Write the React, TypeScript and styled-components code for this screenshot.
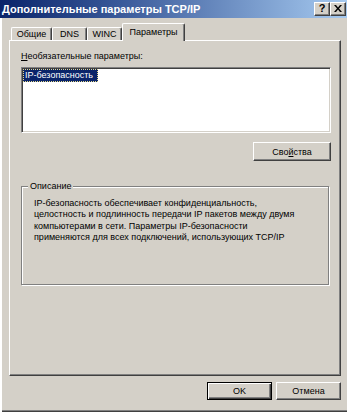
import styled, { createGlobalStyle } from 'styled-components';

const GlobalStyle = createGlobalStyle`
  html, body {
    margin: 0;
    padding: 0;
    background: #d4d0c8;
  }
  body {
    font-family: 'Liberation Sans', Arial, sans-serif;
    font-size: 9px;
    color: #000;
  }
`;

const Window = styled.div`
  width: 347px;
  height: 412px;
  box-sizing: border-box;
  display: flex;
  flex-direction: column;
  background: #d4d0c8;
  box-shadow: inset 2px 0 0 #fff, inset 1px 0 0 #d4d0c8, inset 0 -1px 0 #404040, inset 0 -2px 0 #808080;
`;

const TitleBar = styled.div`
  height: 18px;
  display: flex;
  align-items: center;
  padding: 0 1px 0 2px;
  background: linear-gradient(to right, #0a246a 0%, #3a5a9a 35%, #a6caf0 100%);
`;

const TitleText = styled.div`
  flex: 1;
  color: #fff;
  font-weight: bold;
  font-size: 11px;
  white-space: nowrap;
`;

const CaptionButton = styled.div`
  width: 16px;
  height: 14px;
  box-sizing: border-box;
  display: flex;
  align-items: center;
  justify-content: center;
  background: #d4d0c8;
  border: 1px solid;
  border-color: #fff #404040 #404040 #fff;
  box-shadow: inset -1px -1px 0 #808080;
  font-weight: bold;
  font-size: 11px;
  line-height: 1;
  padding-bottom: 1px;
`;

const Body = styled.div`
  flex: 1;
  display: flex;
  flex-direction: column;
  padding: 5px 0 0 9px;
`;

const TabRow = styled.div`
  height: 17px;
  display: flex;
  align-items: flex-end;
  padding-left: 2px;
  position: relative;
  z-index: 1;
`;

const Tab = styled.div<{ $active?: boolean; $w: number }>`
  width: ${p => p.$w}px;
  height: ${p => (p.$active ? 18 : 13)}px;
  margin-bottom: ${p => (p.$active ? -1 : 0)}px;
  box-sizing: border-box;
  background: #d4d0c8;
  border-top: 1px solid #fff;
  border-left: 1px solid #fff;
  border-right: 1px solid #404040;
  border-radius: 2px 2px 0 0;
  box-shadow: inset -1px 0 0 #808080;
  display: flex;
  align-items: ${p => (p.$active ? 'flex-start' : 'center')};
  padding-top: ${p => (p.$active ? 3 : 0)}px;
  justify-content: center;
  white-space: nowrap;
`;

const Panel = styled.div`
  width: 332px;
  height: 336px;
  box-sizing: border-box;
  border-top: 1px solid #fff;
  border-left: 1px solid #fff;
  border-right: 1px solid #404040;
  border-bottom: 1px solid #404040;
  box-shadow: inset -1px -1px 0 #808080;
  padding: 9px 9px 0 11px;
  display: flex;
  flex-direction: column;
`;

const FieldLabel = styled.div`
  line-height: 13px;
  white-space: nowrap;
`;

const ListBox = styled.div`
  margin-top: 4px;
  height: 66px;
  box-sizing: border-box;
  background: #fff;
  border: 1px solid;
  border-color: #808080 #fff #fff #808080;
  box-shadow: inset 1px 1px 0 #404040, inset -1px -1px 0 #d4d0c8;
  padding: 1px 0 0 1px;
`;

const ListItem = styled.div`
  display: inline-block;
  background: #0a246a;
  color: #fff;
  line-height: 11px;
  padding: 0 4px 0 1px;
  border: 1px dotted #e8dc8c;
`;

const ButtonRow = styled.div<{ $top?: number }>`
  display: flex;
  justify-content: flex-end;
  gap: 4px;
  margin-top: ${p => p.$top ?? 0}px;
`;

const Button = styled.div<{ $w: number; $h: number; $default?: boolean }>`
  width: ${p => p.$w}px;
  height: ${p => p.$h}px;
  box-sizing: border-box;
  display: flex;
  align-items: center;
  justify-content: center;
  background: #d4d0c8;
  border: 1px solid;
  border-color: ${p => (p.$default ? '#000' : '#fff #404040 #404040 #fff')};
  box-shadow: ${p =>
    p.$default
      ? 'inset 1px 1px 0 #fff, inset -1px -1px 0 #404040, inset -2px -2px 0 #808080'
      : 'inset -1px -1px 0 #808080'};
  white-space: nowrap;
`;

const GroupBox = styled.div`
  position: relative;
  margin-top: 25px;
  height: 99px;
  width: 308px;
  box-sizing: border-box;
  border: 1px solid #808080;
  box-shadow: 1px 1px 0 #fff, inset 1px 1px 0 #fff;
  padding: 11px 0 0 12px;
`;

const Legend = styled.div`
  position: absolute;
  top: -7px;
  left: 6px;
  padding: 0 2px;
  background: #d4d0c8;
  line-height: 13px;
`;

const Description = styled.div`
  line-height: 11.4px;
  white-space: nowrap;
`;

const Footer = styled.div`
  width: 332px;
  margin-top: 6px;
`;

export default function App() {
  return (
    <>
      <GlobalStyle />
      <Window>
        <TitleBar>
          <TitleText>Дополнительные параметры TCP/IP</TitleText>
          <CaptionButton>?</CaptionButton>
          <CaptionButton>
            <svg width="8" height="7" viewBox="0 0 8 7">
              <path d="M0 0h2l2 2.5L6 0h2L5 3.5 8 7H6L4 4.5 2 7H0l3-3.5z" fill="#000" />
            </svg>
          </CaptionButton>
        </TitleBar>
        <Body>
          <TabRow>
            <Tab $w={41}>Общие</Tab>
            <Tab $w={35}>DNS</Tab>
            <Tab $w={35}>WINC</Tab>
            <Tab $w={63} $active>Параметры</Tab>
          </TabRow>
          <Panel>
            <FieldLabel>
              <u>Н</u>еобязательные параметры:
            </FieldLabel>
            <ListBox>
              <ListItem>IP-безопасность</ListItem>
            </ListBox>
            <ButtonRow $top={9}>
              <Button $w={78} $h={19}>
                Сво<u>й</u>ства
              </Button>
            </ButtonRow>
            <GroupBox>
              <Legend>Описание</Legend>
              <Description>
                IP-безопасность обеспечивает конфиденциальность,
                <br />
                целостность и подлинность передачи IP пакетов между двумя
                <br />
                компьютерами в сети. Параметры IP-безопасности
                <br />
                применяются для всех подключений, использующих TCP/IP
              </Description>
            </GroupBox>
          </Panel>
          <Footer>
            <ButtonRow>
              <Button $w={65} $h={18} $default>
                OK
              </Button>
              <Button $w={65} $h={18}>
                Отмена
              </Button>
            </ButtonRow>
          </Footer>
        </Body>
      </Window>
    </>
  );
}
